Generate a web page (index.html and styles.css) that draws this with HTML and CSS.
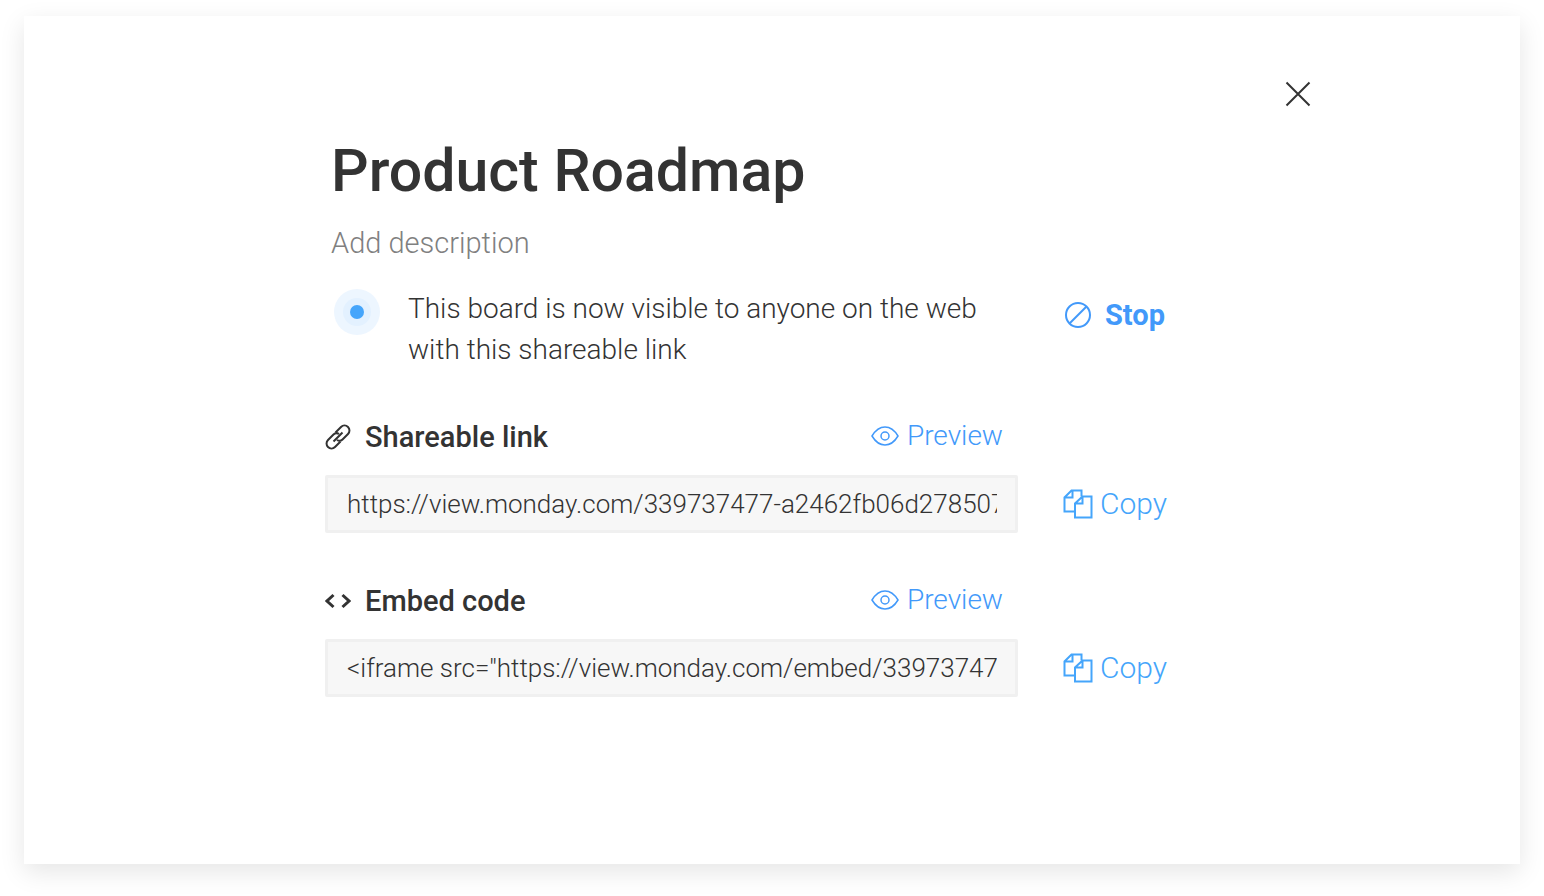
FILE: index.html
```
<!DOCTYPE html>
<html lang="en">
<head>
<meta charset="utf-8">
<title>Product Roadmap</title>
<link rel="stylesheet" href="styles.css">
</head>
<body>
<svg class="defs" aria-hidden="true">
  <symbol id="eye" viewBox="0 0 28 20">
    <path d="M1 10C4 5 9 1 14 1s10 4 13 9c-3 5-8 9-13 9S4 15 1 10z"/>
    <circle cx="14" cy="10" r="4"/>
  </symbol>
  <symbol id="copy" viewBox="0 0 30 30">
    <path d="M11 22.500H1.500V8.500L8.500 1.500H18.500V7.500M9.500 1.500V8.500H1.500"/>
    <path d="M12 28.500V14.500L19.500 7.500H28.500V28.500zM19.500 7.500V14.500H12"/>
  </symbol>
</svg>
<main class="dialog">
  <div class="toolbar">
    <button class="close" type="button" aria-label="Close">
      <svg class="icon" width="26" height="26" viewBox="0 0 26 26"><path d="M1.500 1.500L24.500 24.500M24.500 1.500L1.500 24.500"/></svg>
    </button>
  </div>
  <div class="content">
    <h1 class="title">Product Roadmap</h1>
    <p class="description">Add description</p>

    <div class="status row">
      <div class="notice">
        <svg class="pulse" width="46" height="46" viewBox="0 0 46 46">
          <circle class="halo" cx="23" cy="23" r="23"/>
          <circle class="ring" cx="23" cy="23" r="14"/>
          <circle class="dot" cx="23" cy="23" r="7"/>
        </svg>
        <p class="message">This board is now visible to anyone on the web with this shareable link</p>
      </div>
      <button class="action stop" type="button">
        <svg class="icon" width="28" height="28" viewBox="0 0 28 28"><circle cx="14" cy="14" r="12"/><path d="M5.500 22.500L22.500 5.500"/></svg>
        Stop
      </button>
    </div>

    <section class="share">
      <div class="row">
        <div class="heading">
          <label class="label" for="link">
            <svg class="icon link-icon" width="26" height="28" viewBox="0 0 26 28">
              <path d="M10.500 9.500L16 4A4.800 4.800 0 0 1 23 11L17.500 16.500C16 18 13.500 18 12 17M15.500 18.500L10 24A4.800 4.800 0 0 1 3 17L8.500 11.500C10 10 12.500 10 14 11M8.500 18.500L17.500 9.500"/>
            </svg>
            Shareable link
          </label>
          <a class="preview" href="#link"><svg class="icon eye-icon" width="28" height="20"><use href="#eye"/></svg>Preview</a>
        </div>
      </div>
      <div class="row">
        <input class="field" id="link" type="text" readonly value="https://view.monday.com/339737477-a2462fb06d278507">
        <button class="action copy" type="button"><svg class="icon" width="30" height="30"><use href="#copy"/></svg>Copy</button>
      </div>
    </section>

    <section class="share">
      <div class="row">
        <div class="heading">
          <label class="label" for="embed">
            <svg class="icon code-icon" width="26" height="28" viewBox="0 0 26 28"><path d="M8.500 8L2 14L8.500 20M17.500 8L24 14L17.500 20"/></svg>
            Embed code
          </label>
          <a class="preview" href="#embed"><svg class="icon eye-icon" width="28" height="20"><use href="#eye"/></svg>Preview</a>
        </div>
      </div>
      <div class="row">
        <input class="field" id="embed" type="text" readonly value="&lt;iframe src=&quot;https://view.monday.com/embed/339737477-a2462fb06d278507">
        <button class="action copy" type="button"><svg class="icon" width="30" height="30"><use href="#copy"/></svg>Copy</button>
      </div>
    </section>
  </div>
</main>
</body>
</html>
```
FILE: styles.css
```
* {
  box-sizing: border-box;
}

body {
  margin: 0;
  min-height: 100vh;
  padding: 16px 24px 32px;
  display: flex;
  background: #fff;
  color: #333;
  font: 300 28px/40px Roboto, sans-serif;
}

.defs {
  position: absolute;
  width: 0;
  height: 0;
}

.dialog {
  flex: 1;
  min-width: 0;
  padding: 64px 208px 64px 301px;
  background: #fff;
  box-shadow: 0 8px 24px rgba(0, 0, 0, 0.1);
}

.toolbar {
  display: flex;
  justify-content: flex-end;
}

button {
  padding: 0;
  border: 0;
  background: none;
  color: inherit;
  font: inherit;
  cursor: pointer;
}

.icon {
  flex: none;
  fill: none;
  stroke: currentColor;
  stroke-width: 2;
}

.close {
  display: flex;
  width: 28px;
  height: 28px;
  align-items: center;
  justify-content: center;
}

.content {
  max-width: 842px;
}

.title {
  margin: 27px 0 0 6px;
  font-size: 59px;
  font-weight: 500;
  line-height: 72px;
}

.description {
  margin: 16px 0 25px 6px;
  color: #808080;
  font-size: 29px;
}

.row {
  display: grid;
  grid-template-columns: minmax(0, 1fr) 104px;
  column-gap: 45px;
  align-items: center;
}

.status {
  align-items: start;
}

.notice {
  display: flex;
  align-items: flex-start;
  gap: 28px;
  padding-left: 9px;
}

.pulse {
  flex: none;
  margin-top: 1px;
}

.halo {
  fill: #edf6ff;
}

.ring {
  fill: #e3f1ff;
}

.dot {
  fill: #45a5fb;
}

.message {
  margin: 0;
  max-width: 580px;
  line-height: 41px;
}

.action {
  display: flex;
  align-items: center;
  color: #45a5fb;
  white-space: nowrap;
}

.stop {
  gap: 13px;
  margin-top: 7px;
  padding-left: 1px;
  color: #4299fa;
  font-size: 29px;
  font-weight: 700;
}

.copy {
  gap: 7px;
  font-size: 30px;
}

.share {
  margin-top: 48px;
}

.status + .share {
  margin-top: 47px;
}

.heading {
  display: flex;
  align-items: flex-start;
  justify-content: space-between;
  padding-right: 15px;
  margin-bottom: 18px;
}

.label {
  display: flex;
  align-items: center;
  gap: 14px;
  font-size: 29px;
  font-weight: 500;
}

.code-icon {
  stroke-width: 3;
}

.preview {
  display: flex;
  align-items: center;
  gap: 8px;
  color: #4299fa;
  line-height: 37px;
  text-decoration: none;
}

.eye-icon {
  stroke-width: 1.5;
}

.field {
  width: 100%;
  height: 58px;
  padding: 0 18px 0 19px;
  border: 3px solid #f0f0f0;
  border-radius: 2px;
  background: #f7f7f7;
  color: #333;
  font: inherit;
  font-size: 26px;
}
```
